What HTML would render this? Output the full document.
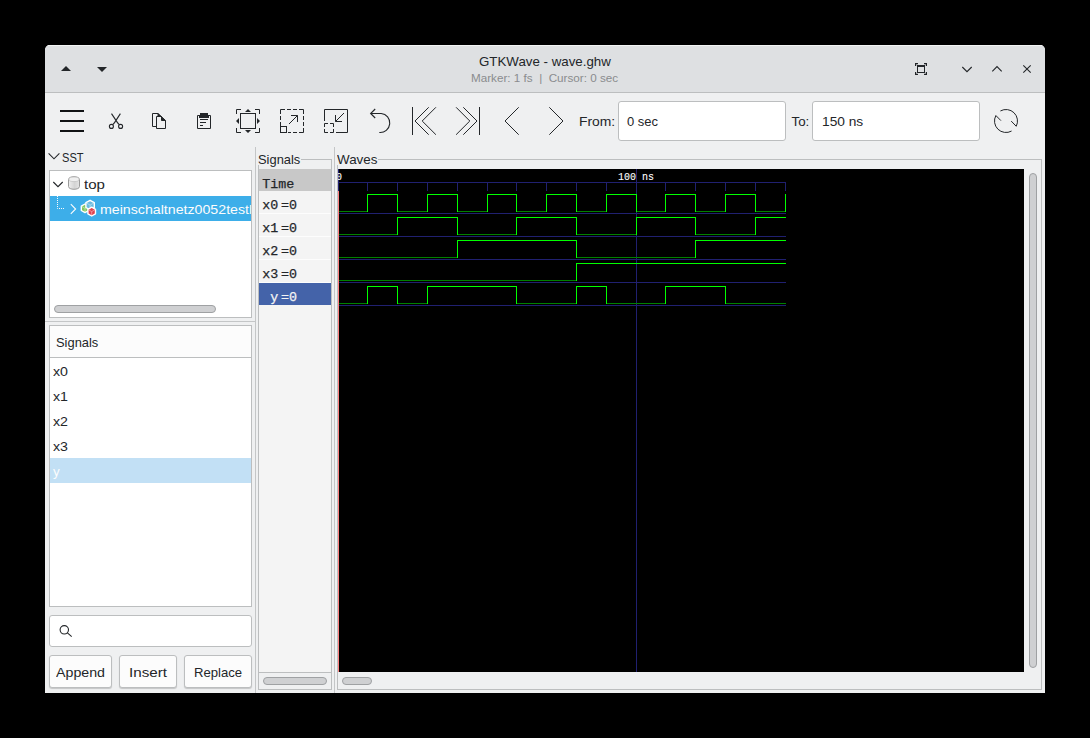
<!DOCTYPE html>
<html><head><meta charset="utf-8"><title>GTKWave - wave.ghw</title>
<style>
html,body{margin:0;padding:0;background:#000;}
body{width:1090px;height:738px;position:relative;overflow:hidden;font-family:"Liberation Sans",sans-serif;font-size:13.33px;color:#232629;}
.abs{position:absolute;}
.t{position:absolute;white-space:nowrap;line-height:1;}
.mono{font-family:"Liberation Mono",monospace;-webkit-text-stroke:0.25px currentColor;}
#win{position:absolute;left:45px;top:45px;width:1000px;height:648px;background:#eff0f1;border-radius:5px 5px 0 0;overflow:hidden;}
#title{position:absolute;left:0;top:0;width:1000px;height:47px;background:#dee0e2;border-bottom:1px solid #bcbebf;box-shadow:inset 0 1px 0 #f3f4f4;}
.box{position:absolute;box-sizing:border-box;border:1px solid #bcbebf;background:#fff;}
.btn{position:absolute;box-sizing:border-box;border:1px solid #bcbebf;border-radius:3px;background:#fcfcfc;box-shadow:0 1px 1px rgba(0,0,0,0.18);}
.thumb{position:absolute;box-sizing:border-box;border:1px solid #9fa1a3;background:#cfd0d2;border-radius:4px;}
svg{position:absolute;left:0;top:0;overflow:visible;}
</style></head><body>
<div id="win"><div id="title"></div></div>

<div class="abs" style="left:0;top:0;width:1090px;height:738px;">
<div class="t" id="ttl" style="transform-origin:0 0;transform:scaleX(0.998);left:478.6px;top:55px;font-size:13.33px;">GTKWave - wave.ghw</div>
<div class="t" id="sub" style="transform-origin:0 0;transform:scaleX(1.062);left:471.1px;top:72.5px;font-size:11px;color:#8a8c8e;white-space:pre;">Marker: 1 fs  |  Cursor: 0 sec</div>
<div class="t" id="from" style="transform-origin:0 0;transform:scaleX(1.04);left:579.2px;top:114.5px;">From:</div>
<div class="box" style="left:618px;top:101px;width:168px;height:40px;border-radius:3px;"></div>
<div class="t" id="fromv" style="transform-origin:0 0;transform:scaleX(0.975);left:627.2px;top:114.5px;">0 sec</div>
<div class="t" id="to" style="left:791.5px;top:114.5px;">To:</div>
<div class="box" style="left:812px;top:101px;width:168px;height:40px;border-radius:3px;"></div>
<div class="t" id="tov" style="transform-origin:0 0;transform:scaleX(1.03);left:821.6px;top:114.5px;">150 ns</div>
<div class="t" id="sst" style="transform-origin:0 0;transform:scaleX(0.83);left:62.4px;top:150.5px;">SST</div>
<div class="box" style="left:49px;top:170px;width:203px;height:148px;"></div>
<div class="abs" style="left:50px;top:196px;width:201px;height:25px;background:#3daee9;"></div>
<div class="t" id="top" style="transform-origin:0 0;transform:scaleX(1.13);left:84.4px;top:178px;">top</div>
<div class="abs" style="left:99.6px;top:196px;width:151.4px;height:25px;overflow:hidden;"><div class="t" id="mein" style="transform-origin:0 0;transform:scaleX(1.064);left:0;top:7px;color:#fcfcfc;">meinschaltnetz0052testbench</div></div>
<div class="thumb" style="left:54px;top:305px;width:162px;height:8px;"></div>
<div class="abs" style="left:45px;top:321px;width:210px;height:1px;background:#c4c6c7;"></div>
<div class="box" style="left:49px;top:325px;width:203px;height:282px;"></div>
<div class="abs" style="left:50px;top:326px;width:201px;height:31px;background:#fcfcfc;border-bottom:1px solid #bcbebf;"></div>
<div class="t" id="sigh" style="transform-origin:0 0;transform:scaleX(0.968);left:55.7px;top:335.5px;">Signals</div>
<div class="t" style="left:53px;top:364.5px;transform-origin:0 0;transform:scaleX(1.065);">x0</div>
<div class="t" style="left:53px;top:389.5px;transform-origin:0 0;transform:scaleX(1.065);">x1</div>
<div class="t" style="left:53px;top:414.5px;transform-origin:0 0;transform:scaleX(1.065);">x2</div>
<div class="t" style="left:53px;top:439.5px;transform-origin:0 0;transform:scaleX(1.065);">x3</div>
<div class="abs" style="left:50px;top:458px;width:201px;height:25px;background:#c2e0f5;"></div>
<div class="t" style="left:53px;top:464.5px;color:#fcfcfc;">y</div>
<div class="box" style="left:49px;top:615px;width:203px;height:32px;border-radius:3px;"></div>
<div class="btn" style="left:49px;top:655px;width:63px;height:33px;"></div>
<div class="btn" style="left:119px;top:655px;width:58px;height:33px;"></div>
<div class="btn" style="left:184px;top:655px;width:68px;height:33px;"></div>
<div class="t" id="app" style="transform-origin:0 0;transform:scaleX(1.066);left:56.2px;top:665.5px;">Append</div>
<div class="t" id="ins" style="transform-origin:0 0;transform:scaleX(1.14);left:129.1px;top:665.5px;">Insert</div>
<div class="t" id="rep" style="transform-origin:0 0;transform:scaleX(0.985);left:194px;top:665.5px;">Replace</div>
<div class="abs" style="left:255px;top:147px;width:1px;height:546px;background:#c4c6c7;"></div>
<div class="abs" style="left:334px;top:147px;width:1px;height:546px;background:#c4c6c7;"></div>
<div class="abs" style="left:258px;top:159px;width:74px;height:531px;box-sizing:border-box;border:1px solid #bcbebf;"></div>
<div class="abs" style="left:257px;top:152px;width:44px;height:13px;background:#eff0f1;"></div>
<div class="t" id="sigm" style="transform-origin:0 0;transform:scaleX(0.968);left:257.8px;top:152.5px;">Signals</div>
<div class="abs" style="left:259px;top:169px;width:72px;height:503px;background:#f4f4f4;"></div>
<div class="abs" style="left:259px;top:169px;width:72px;height:22px;background:#c8c8c8;"></div>
<div class="abs" style="left:259px;top:213px;width:72px;height:1px;background:#fdfdfd;"></div>
<div class="abs" style="left:259px;top:236px;width:72px;height:1px;background:#fdfdfd;"></div>
<div class="abs" style="left:259px;top:259px;width:72px;height:1px;background:#fdfdfd;"></div>
<div class="abs" style="left:259px;top:282px;width:72px;height:1px;background:#fdfdfd;"></div>
<div class="abs" style="left:259px;top:283px;width:72px;height:22px;background:#4463a9;"></div>
<div class="abs" style="left:259px;top:672px;width:72px;height:1px;background:#bcbebf;"></div>
<div class="thumb" style="left:263px;top:677px;width:64px;height:8px;"></div>
<div class="t mono" id="time" style="left:262.3px;top:178px;font-size:13.33px;">Time</div>
<div class="t mono" style="left:262.3px;top:199px;font-size:13.33px;">x0</div>
<div class="t mono" style="left:281px;top:199px;font-size:13.33px;">=0</div>
<div class="t mono" style="left:262.3px;top:222px;font-size:13.33px;">x1</div>
<div class="t mono" style="left:281px;top:222px;font-size:13.33px;">=0</div>
<div class="t mono" style="left:262.3px;top:245px;font-size:13.33px;">x2</div>
<div class="t mono" style="left:281px;top:245px;font-size:13.33px;">=0</div>
<div class="t mono" style="left:262.3px;top:268px;font-size:13.33px;">x3</div>
<div class="t mono" style="left:281px;top:268px;font-size:13.33px;">=0</div>
<div class="t mono" style="left:270.3px;top:291px;font-size:13.33px;color:#f4f4f4;">y</div>
<div class="t mono" style="left:281px;top:291px;font-size:13.33px;color:#f4f4f4;">=0</div>
<div class="abs" style="left:337px;top:159px;width:705px;height:531px;box-sizing:border-box;border:1px solid #bcbebf;"></div>
<div class="abs" style="left:336px;top:152px;width:42px;height:13px;background:#eff0f1;"></div>
<div class="t" id="wav" style="transform-origin:0 0;transform:scaleX(1.005);left:337.3px;top:152.5px;">Waves</div>
<div class="abs" style="left:338px;top:169px;width:686px;height:503px;background:#000;"></div>
<div class="thumb" style="left:342px;top:677px;width:30px;height:8px;"></div>
<div class="thumb" style="left:1029px;top:173px;width:8px;height:495px;"></div>
</div>
<svg width="1090" height="738" viewBox="0 0 1090 738">
<g shape-rendering="crispEdges">
<rect x="338" y="182" width="448" height="1" fill="#202070"/>
<rect x="338" y="182" width="1" height="9" fill="#202070"/>
<rect x="367" y="182" width="1" height="9" fill="#202070"/>
<rect x="397" y="182" width="1" height="9" fill="#202070"/>
<rect x="427" y="182" width="1" height="9" fill="#202070"/>
<rect x="457" y="182" width="1" height="9" fill="#202070"/>
<rect x="487" y="182" width="1" height="9" fill="#202070"/>
<rect x="516" y="182" width="1" height="9" fill="#202070"/>
<rect x="546" y="182" width="1" height="9" fill="#202070"/>
<rect x="576" y="182" width="1" height="9" fill="#202070"/>
<rect x="606" y="182" width="1" height="9" fill="#202070"/>
<rect x="636" y="182" width="1" height="9" fill="#202070"/>
<rect x="665" y="182" width="1" height="9" fill="#202070"/>
<rect x="695" y="182" width="1" height="9" fill="#202070"/>
<rect x="725" y="182" width="1" height="9" fill="#202070"/>
<rect x="755" y="182" width="1" height="9" fill="#202070"/>
<rect x="785" y="182" width="1" height="9" fill="#202070"/>
<rect x="338" y="169" width="1" height="22" fill="#202070"/>
<rect x="636" y="169" width="1" height="503" fill="#202070"/>
<rect x="338" y="213" width="448" height="1" fill="#202070"/>
<rect x="338" y="236" width="448" height="1" fill="#202070"/>
<rect x="338" y="259" width="448" height="1" fill="#202070"/>
<rect x="338" y="282" width="448" height="1" fill="#202070"/>
<rect x="338" y="305" width="448" height="1" fill="#202070"/>
<rect x="338" y="191" width="1" height="481" fill="#ff8080"/>
<rect x="339" y="211" width="29" height="1" fill="#008000"/>
<rect x="367" y="194" width="31" height="1" fill="#00ff00"/>
<rect x="397" y="211" width="31" height="1" fill="#008000"/>
<rect x="427" y="194" width="31" height="1" fill="#00ff00"/>
<rect x="457" y="211" width="31" height="1" fill="#008000"/>
<rect x="487" y="194" width="30" height="1" fill="#00ff00"/>
<rect x="516" y="211" width="31" height="1" fill="#008000"/>
<rect x="546" y="194" width="31" height="1" fill="#00ff00"/>
<rect x="576" y="211" width="31" height="1" fill="#008000"/>
<rect x="606" y="194" width="31" height="1" fill="#00ff00"/>
<rect x="636" y="211" width="30" height="1" fill="#008000"/>
<rect x="665" y="194" width="31" height="1" fill="#00ff00"/>
<rect x="695" y="211" width="31" height="1" fill="#008000"/>
<rect x="725" y="194" width="31" height="1" fill="#00ff00"/>
<rect x="755" y="211" width="31" height="1" fill="#008000"/>
<rect x="785" y="194" width="1" height="1" fill="#00ff00"/>
<rect x="367" y="194" width="1" height="18" fill="#00ff00"/>
<rect x="397" y="194" width="1" height="18" fill="#00ff00"/>
<rect x="427" y="194" width="1" height="18" fill="#00ff00"/>
<rect x="457" y="194" width="1" height="18" fill="#00ff00"/>
<rect x="487" y="194" width="1" height="18" fill="#00ff00"/>
<rect x="516" y="194" width="1" height="18" fill="#00ff00"/>
<rect x="546" y="194" width="1" height="18" fill="#00ff00"/>
<rect x="576" y="194" width="1" height="18" fill="#00ff00"/>
<rect x="606" y="194" width="1" height="18" fill="#00ff00"/>
<rect x="636" y="194" width="1" height="18" fill="#00ff00"/>
<rect x="665" y="194" width="1" height="18" fill="#00ff00"/>
<rect x="695" y="194" width="1" height="18" fill="#00ff00"/>
<rect x="725" y="194" width="1" height="18" fill="#00ff00"/>
<rect x="755" y="194" width="1" height="18" fill="#00ff00"/>
<rect x="785" y="194" width="1" height="18" fill="#00ff00"/>
<rect x="339" y="234" width="59" height="1" fill="#008000"/>
<rect x="397" y="217" width="61" height="1" fill="#00ff00"/>
<rect x="457" y="234" width="60" height="1" fill="#008000"/>
<rect x="516" y="217" width="61" height="1" fill="#00ff00"/>
<rect x="576" y="234" width="61" height="1" fill="#008000"/>
<rect x="636" y="217" width="60" height="1" fill="#00ff00"/>
<rect x="695" y="234" width="61" height="1" fill="#008000"/>
<rect x="755" y="217" width="31" height="1" fill="#00ff00"/>
<rect x="397" y="217" width="1" height="18" fill="#00ff00"/>
<rect x="457" y="217" width="1" height="18" fill="#00ff00"/>
<rect x="516" y="217" width="1" height="18" fill="#00ff00"/>
<rect x="576" y="217" width="1" height="18" fill="#00ff00"/>
<rect x="636" y="217" width="1" height="18" fill="#00ff00"/>
<rect x="695" y="217" width="1" height="18" fill="#00ff00"/>
<rect x="755" y="217" width="1" height="18" fill="#00ff00"/>
<rect x="339" y="257" width="119" height="1" fill="#008000"/>
<rect x="457" y="240" width="120" height="1" fill="#00ff00"/>
<rect x="576" y="257" width="120" height="1" fill="#008000"/>
<rect x="695" y="240" width="91" height="1" fill="#00ff00"/>
<rect x="457" y="240" width="1" height="18" fill="#00ff00"/>
<rect x="576" y="240" width="1" height="18" fill="#00ff00"/>
<rect x="695" y="240" width="1" height="18" fill="#00ff00"/>
<rect x="339" y="280" width="238" height="1" fill="#008000"/>
<rect x="576" y="263" width="210" height="1" fill="#00ff00"/>
<rect x="576" y="263" width="1" height="18" fill="#00ff00"/>
<rect x="339" y="303" width="29" height="1" fill="#008000"/>
<rect x="367" y="286" width="31" height="1" fill="#00ff00"/>
<rect x="397" y="303" width="31" height="1" fill="#008000"/>
<rect x="427" y="286" width="90" height="1" fill="#00ff00"/>
<rect x="516" y="303" width="61" height="1" fill="#008000"/>
<rect x="576" y="286" width="31" height="1" fill="#00ff00"/>
<rect x="606" y="303" width="60" height="1" fill="#008000"/>
<rect x="665" y="286" width="61" height="1" fill="#00ff00"/>
<rect x="725" y="303" width="61" height="1" fill="#008000"/>
<rect x="367" y="286" width="1" height="18" fill="#00ff00"/>
<rect x="397" y="286" width="1" height="18" fill="#00ff00"/>
<rect x="427" y="286" width="1" height="18" fill="#00ff00"/>
<rect x="516" y="286" width="1" height="18" fill="#00ff00"/>
<rect x="576" y="286" width="1" height="18" fill="#00ff00"/>
<rect x="606" y="286" width="1" height="18" fill="#00ff00"/>
<rect x="665" y="286" width="1" height="18" fill="#00ff00"/>
<rect x="725" y="286" width="1" height="18" fill="#00ff00"/>
</g>
</svg>
<div class="abs" style="left:338px;top:169px;width:686px;height:14px;overflow:hidden;">
<div class="t mono" id="t0" style="left:-1.6px;top:2.5px;font-size:11px;color:#fff;transform-origin:0 0;transform:scaleX(0.91);-webkit-text-stroke:0.1px #fff;">0</div>
<div class="t mono" id="t100" style="left:280px;top:2.5px;font-size:11px;color:#fff;transform-origin:0 0;transform:scaleX(0.91);-webkit-text-stroke:0.1px #fff;">100 ns</div>
</div>
<svg width="1090" height="738" viewBox="0 0 1090 738" fill="none" stroke="#232629" stroke-width="1">
<path d="M61 71 L66 66 L71 71 Z" fill="#232629" stroke="none"/>
<path d="M97 67 L107 67 L102 72 Z" fill="#232629" stroke="none"/>
<g stroke="#232629" stroke-width="1.2">
<path d="M915.6 66 V63.6 H918"/><path d="M924 63.6 H926.4 V66"/><path d="M915.6 72 V74.4 H918"/><path d="M924 74.4 H926.4 V72"/>
</g>
<rect x="917.5" y="66.5" width="7" height="6" stroke="#232629"/><rect x="917" y="65" width="8" height="2" fill="#232629" stroke="none"/>
<path d="M962.3 67 L967 71.7 L971.7 67" stroke-width="1.1"/>
<path d="M992.3 71.3 L997 66.6 L1001.7 71.3" stroke-width="1.1"/>
<path d="M1023.3 65.3 L1030.7 72.7 M1030.7 65.3 L1023.3 72.7" stroke-width="1.1"/>
<g fill="#111315" stroke="none" shape-rendering="crispEdges"><rect x="60" y="110" width="24" height="2"/><rect x="60" y="120" width="24" height="2"/><rect x="60" y="130" width="24" height="2"/></g>
<path d="M111.5 113.6 L117.3 122.4 C118.2 123.8 118.6 124.3 119.3 124.6 M120.4 113.6 L114.7 122.4 C113.8 123.8 113.4 124.3 112.7 124.6" stroke-width="1.1"/>
<circle cx="111.4" cy="126.4" r="2" stroke-width="1.1"/><circle cx="120.6" cy="126.4" r="2" stroke-width="1.1"/>
<path d="M156.5 126.5 H152.5 V113.5 H158 L165.5 120.5 V128.5 H156.5 V116.5 H161.5 V120.5 H165.5"/>
<path d="M157.5 113.5 H158.3 L165.8 120.5 H161.5 V116.5 H157.5 Z" fill="#232629" stroke="none"/>
<path d="M199.5 115.5 H197.5 V128.5 H210.5 V115.5 H208.5"/>
<path d="M200 113 H208 V115 H209 V118 H199 V115 H200 Z" fill="#232629" stroke="none"/>
<path d="M200 119.5 H208 M200 122.5 H206 M200 125.5 H203"/>
<path d="M236.5 114 V109.5 H241 M255 109.5 H259.5 V114 M236.5 128 V132.5 H241 M255 132.5 H259.5 V128"/>
<rect x="240.5" y="113.5" width="15" height="15"/>
<path d="M248 109 L251 112 H245 Z M248 133 L251 130 H245 Z M236 121 L239 118 V124 Z M260 121 L257 118 V124 Z" fill="#232629" stroke="none"/>
<path d="M280.5 114 V109.5 H285 M287 109.5 H291 M293 109.5 H297 M299 109.5 H303.5 V114 M303.5 116 V120 M303.5 122 V126 M303.5 128 V132.5 H299 M297 132.5 H293 M291 132.5 H288 M280.5 116 V120 M280.5 122 V126"/>
<rect x="280.5" y="126.5" width="6" height="6"/>
<path d="M289 124 L297.5 115.5 M291 115.5 H297.5 V122"/>
<path d="M324.5 121 V109.5 H347.5 V132.5 H336"/>
<path d="M324.5 127 V123.5 H328 M330 123.5 H333.5 V127 M324.5 129 V132.5 H328 M330 132.5 H333.5 V129"/>
<path d="M344 113 L335.5 121.5 M335.5 115 V121.5 H342"/>
<path d="M375.2 109 L370.6 113.5 L375.2 118 M370.8 113.5 H381.2 A9.5 9.5 0 0 1 379.3 132.45" stroke-width="1.1"/>
<path d="M412.5 107 V135 M428.7 107.3 L415 121 L428.7 134.7 M435.9 107.3 L422.2 121 L435.9 134.7"/>
<path d="M479.5 107 V135 M463.3 107.3 L477 121 L463.3 134.7 M456.1 107.3 L469.8 121 L456.1 134.7"/>
<path d="M518.7 107.3 L505 121 L518.7 134.7"/>
<path d="M549.3 107.3 L563 121 L549.3 134.7"/>
<path d="M1000.40 110.96 A11.5 11.5 0 0 1 1016.23 126.26 L1011.2 121.1"/>
<path d="M1000.9 120.6 L995.89 115.52 A11.5 11.5 0 0 0 1011.57 131.06"/>
<path d="M48.6 153.4 L54 158.8 L59.4 153.4" stroke-width="1.1"/>
<path d="M53.3 182 L58 186.7 L62.7 182" stroke-width="1.1"/>
<path d="M70.8 204.2 L75.6 209 L70.8 213.8" stroke="#fcfcfc" stroke-width="1.1"/>
<path d="M57.5 196 V208.5 H64" stroke="#fcfcfc" stroke-dasharray="1 1"/>
<circle cx="64.3" cy="629.8" r="4.2" stroke-width="1.1"/><path d="M67.4 632.9 L71.7 636.6" stroke-width="1.1"/>
</svg>
<svg width="1090" height="738" viewBox="0 0 1090 738">
<defs><linearGradient id="cyl" x1="0" x2="1" y1="0" y2="0"><stop offset="0" stop-color="#efefef"/><stop offset="0.55" stop-color="#d4d4d4"/><stop offset="1" stop-color="#e4e4e4"/></linearGradient></defs>
<path d="M68.5 179.5 C68.5 175.8 79.5 175.8 79.5 179.5 V186.5 C79.5 190.2 68.5 190.2 68.5 186.5 Z" fill="url(#cyl)" stroke="#9a9a9a" stroke-width="1"/>
<ellipse cx="74" cy="179.3" rx="5" ry="2.3" fill="#f0f0f0" stroke="#b8b8b8" stroke-width="0.6"/>
<path d="M85.0 204.0 L88.7 206.2 L88.7 210.5 L85.0 212.6 L81.3 210.5 L81.3 206.2 Z" fill="#84c862" stroke="#fff" stroke-width="1.4" stroke-linejoin="round"/><path d="M85.0 208.3 L85.0 212.6 M85.0 208.3 L88.7 206.2 M85.0 208.3 L81.3 206.2" stroke="#e6f5dc" stroke-width="0.7" opacity="0.7"/>
<path d="M90.1 200.3 L94.3 202.7 L94.3 207.5 L90.1 209.9 L85.9 207.5 L85.9 202.7 Z" fill="#6bbbe0" stroke="#fff" stroke-width="1.4" stroke-linejoin="round"/><path d="M90.1 205.1 L90.1 209.9 M90.1 205.1 L94.3 202.7 M90.1 205.1 L85.9 202.7" stroke="#e6f5fb" stroke-width="0.7" opacity="0.7"/>
<path d="M91.7 207.2 L95.5 209.4 L95.5 213.8 L91.7 216.0 L87.9 213.8 L87.9 209.4 Z" fill="#e0424e" stroke="#fff" stroke-width="1.4" stroke-linejoin="round"/><path d="M91.7 211.6 L91.7 216.0 M91.7 211.6 L95.5 209.4 M91.7 211.6 L87.9 209.4" stroke="#fbdde0" stroke-width="0.7" opacity="0.7"/>
</svg>
</body></html>
